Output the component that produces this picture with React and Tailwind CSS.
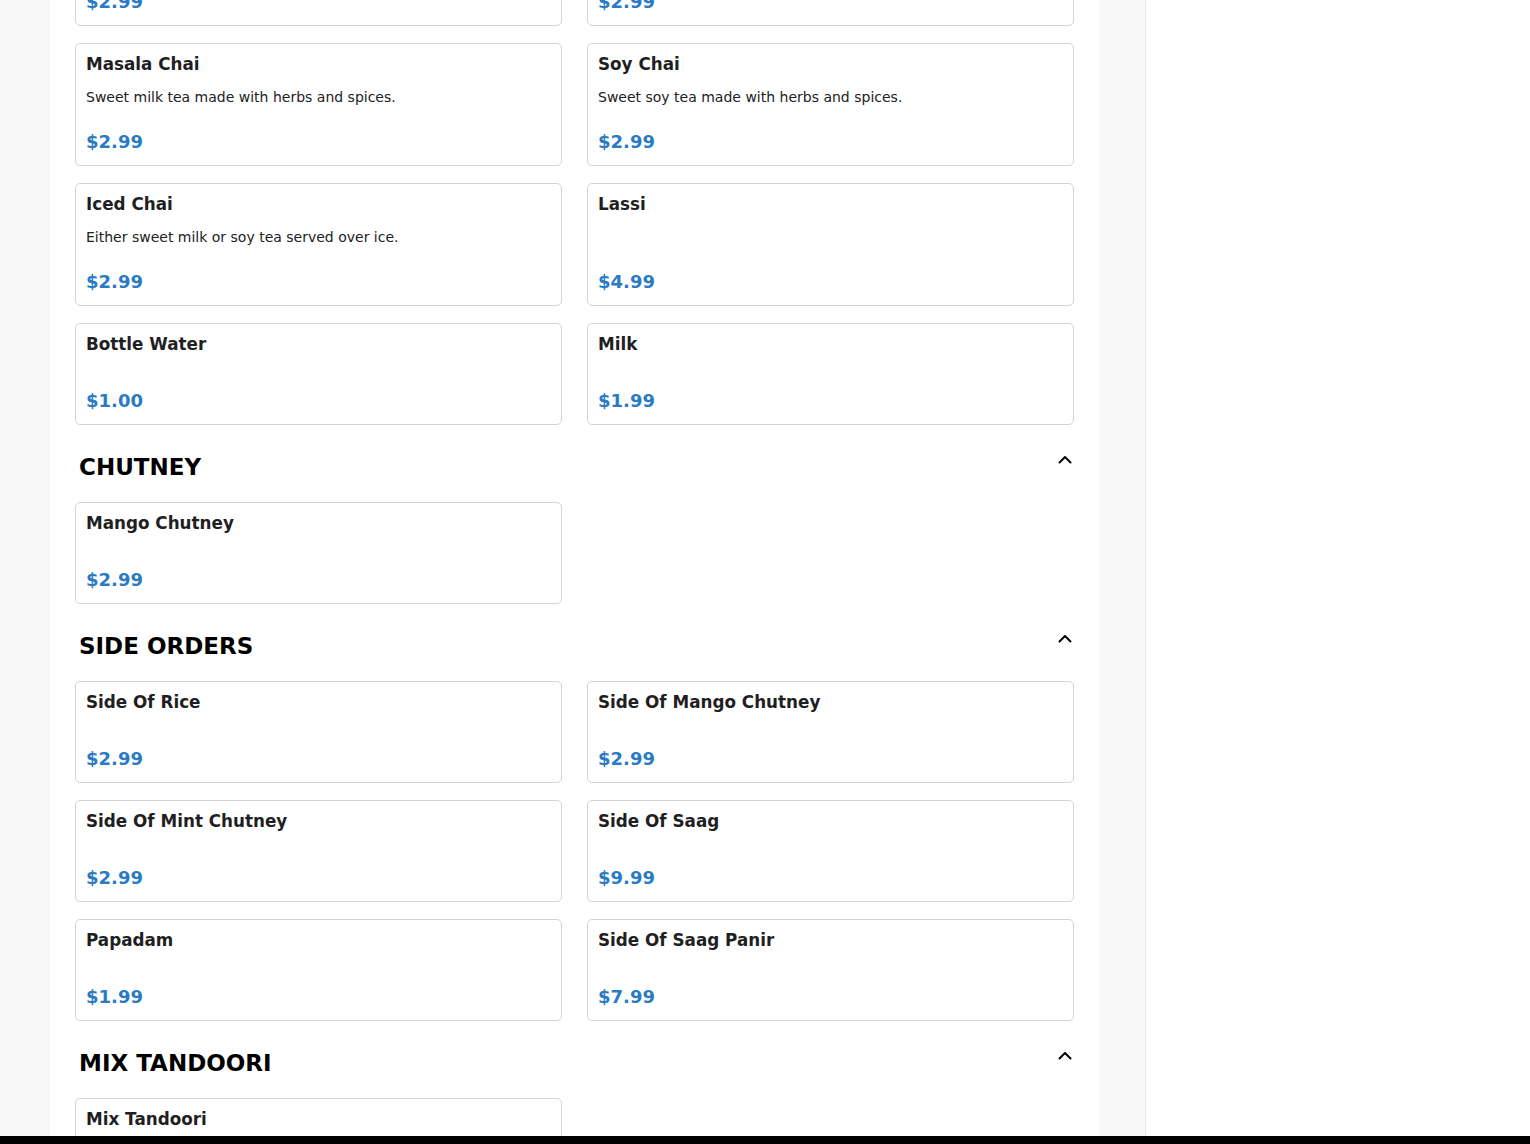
const sections = [
  {
    title: null,
    items: [
      { name: "Mango Lassi", desc: "Sweet yogurt drink blended with mango.", price: "$2.99" },
      { name: "Chai Tea", desc: "Hot tea made with herbs and spices.", price: "$2.99" },
      { name: "Masala Chai", desc: "Sweet milk tea made with herbs and spices.", price: "$2.99" },
      { name: "Soy Chai", desc: "Sweet soy tea made with herbs and spices.", price: "$2.99" },
      { name: "Iced Chai", desc: "Either sweet milk or soy tea served over ice.", price: "$2.99" },
      { name: "Lassi", price: "$4.99" },
      { name: "Bottle Water", price: "$1.00" },
      { name: "Milk", price: "$1.99" },
    ],
  },
  {
    title: "CHUTNEY",
    items: [{ name: "Mango Chutney", price: "$2.99" }],
  },
  {
    title: "SIDE ORDERS",
    items: [
      { name: "Side Of Rice", price: "$2.99" },
      { name: "Side Of Mango Chutney", price: "$2.99" },
      { name: "Side Of Mint Chutney", price: "$2.99" },
      { name: "Side Of Saag", price: "$9.99" },
      { name: "Papadam", price: "$1.99" },
      { name: "Side Of Saag Panir", price: "$7.99" },
    ],
  },
  {
    title: "MIX TANDOORI",
    items: [{ name: "Mix Tandoori", desc: "Assorted tandoori meats.", price: "$14.99" }],
  },
];

function Chevron() {
  return (
    <svg className="h-4 w-4 shrink-0" viewBox="0 0 16 16" fill="none" stroke="#000" strokeWidth={2}>
      <path d="M2.5 10.5L8 5l5.5 5.5" strokeLinecap="round" strokeLinejoin="round" />
    </svg>
  );
}

function ItemCard({ item }) {
  return (
    <div className="flex flex-col rounded-[5px] border border-[#d4d4d4] bg-white px-[10px] pt-[10px] pb-[11px]">
      <h3 className="text-[16.8px] font-bold leading-5 text-[#1f1f23]">{item.name}</h3>
      {/* empty descriptions still keep the spacing, price sticks to the bottom */}
      <p
        className={`flex-1 text-[14px] text-[#212125] ${
          item.desc ? "mt-[13px] leading-5" : "mt-[12px] leading-0"
        }`}
      >
        {item.desc}
      </p>
      <div className="mt-[23px] text-[18px] font-bold leading-6 text-[#2a7bc3]">{item.price}</div>
    </div>
  );
}

export default function App() {
  return (
    <div
      className="flex h-[1144px] flex-col overflow-hidden bg-white"
      style={{ fontFamily: '"DejaVu Sans", Verdana, sans-serif' }}
    >
      <div className="flex min-h-0 flex-1">
        <div className="w-[50px] shrink-0 bg-[#f8f8f8]" />
        <main className="w-[1049px] shrink-0 overflow-hidden bg-white px-[25px]">
          <div className="-mt-[97px]">
            {sections.map((section, i) => (
              <section key={i}>
                {section.title && (
                  <div className="flex items-start justify-between pt-[27px] pb-[20px] pl-1 pr-[1px]">
                    <h2 className="text-[23px] font-bold leading-[30px] text-black">{section.title}</h2>
                    <Chevron />
                  </div>
                )}
                <div className="grid grid-cols-2 gap-x-[25px] gap-y-[17px]">
                  {section.items.map((item) => (
                    <ItemCard key={item.name} item={item} />
                  ))}
                </div>
              </section>
            ))}
          </div>
        </main>
        <div className="w-[47px] shrink-0 border-r border-[#ececec] bg-[#f8f8f8]" />
        <div className="flex-1 bg-white" />
      </div>
      <div className="h-2 shrink-0 bg-black" />
    </div>
  );
}
